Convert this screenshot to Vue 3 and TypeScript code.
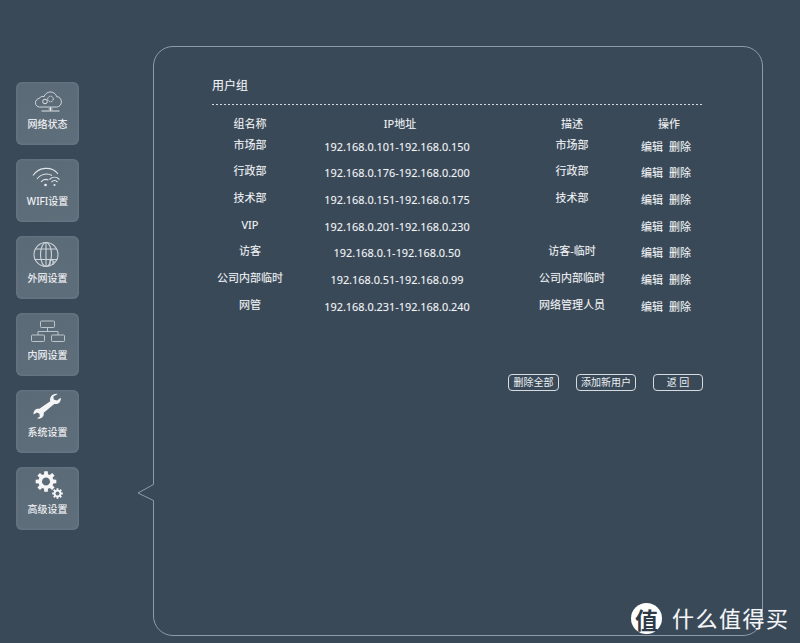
<script setup lang="ts">
interface GroupRow {
  name: string
  range: string
  desc: string
}

const navItems = ['网络状态', 'WIFI设置', '外网设置', '内网设置', '系统设置', '高级设置']

const rows: GroupRow[] = [
  { name: '市场部', range: '192.168.0.101-192.168.0.150', desc: '市场部' },
  { name: '行政部', range: '192.168.0.176-192.168.0.200', desc: '行政部' },
  { name: '技术部', range: '192.168.0.151-192.168.0.175', desc: '技术部' },
  { name: 'VIP', range: '192.168.0.201-192.168.0.230', desc: '' },
  { name: '访客', range: '192.168.0.1-192.168.0.50', desc: '访客-临时' },
  { name: '公司内部临时', range: '192.168.0.51-192.168.0.99', desc: '公司内部临时' },
  { name: '网管', range: '192.168.0.231-192.168.0.240', desc: '网络管理人员' },
]

// gear outline shared by the last nav icon
function gearPath(cx: number, cy: number, outer: number, inner: number, teeth: number): string {
  const step = (Math.PI * 2) / teeth
  const pts: string[] = []
  for (let i = 0; i < teeth; i++) {
    const a = i * step
    const w = step * 0.22
    for (const [r, t] of [[inner, a - w * 1.5], [outer, a - w], [outer, a + w], [inner, a + w * 1.5]] as const) {
      pts.push(`${(cx + r * Math.cos(t)).toFixed(2)} ${(cy + r * Math.sin(t)).toFixed(2)}`)
    }
  }
  return `M${pts.join('L')}Z`
}
</script>

<template>
  <div class="page">
    <nav class="side">
      <div v-for="(label, i) in navItems" :key="label" class="tile">
        <svg class="tile-icon" width="44" height="34" viewBox="0 -2 44 34">
          <g v-if="i === 0" fill="none" stroke="#dfe4e8" stroke-width="1">
            <path transform="translate(4.640 .7) scale(.81 .94)" d="M11 19.500h21c3.500 0 6-2.600 6-5.500 0-3.300-2.700-5.500-5.800-5.500C31 5.300 28 3.500 24.500 3.500c-3.800 0-6.700 2-8 5-1.200-.6-4.500-.6-5.500 1.700-3 .3-5 2.400-5 4.800 0 2.600 2 4.500 5 4.500z" />
            <circle cx="19" cy="13.500" r="2.300" />
            <circle cx="24.500" cy="11" r="2.800" stroke-dasharray="1.500 .7" />
            <path d="M15.500 23h18M24.500 19v4M22.500 21h4" />
          </g>
          <g v-else-if="i === 1" fill="none" stroke="#dfe4e8" stroke-width="1.100">
            <path d="M7 10.500C13 1.500 26 1 32 9" />
            <path d="M11 14C15 8.500 22 8 26 10.500" />
            <path d="M15 17c2-2.500 5-3 7.500-2" />
            <circle cx="19.500" cy="20" r="1.300" fill="#eef1f3" stroke="none" />
            <path d="M23.500 14.500c3-3 7-3 10 0M25.500 17c2-2 4-2 6 0" />
            <circle cx="28.500" cy="20" r="1" fill="#eef1f3" stroke="none" />
          </g>
          <g v-else-if="i === 2" fill="none" stroke="#cdd4da" stroke-width="1.100">
            <circle cx="20" cy="12.500" r="12" />
            <ellipse cx="20" cy="12.500" rx="5.500" ry="12" />
            <path d="M9.500 7h21M8.500 17.500h23M20 .5v24" />
            <path d="M24 24v-6h3v5M27 23v-3h2" />
          </g>
          <g v-else-if="i === 3" fill="none" stroke="#bcc5cc" stroke-width="1">
            <rect x="14.500" y="2" width="14" height="6.500" rx=".8" />
            <rect x="5.500" y="16" width="13" height="6.500" rx=".8" />
            <rect x="25.500" y="16" width="13" height="6.500" rx=".8" />
            <path d="M21.500 8.500v4M12 16v-3.500h20V16" />
          </g>
          <path
            v-else-if="i === 4"
            transform="translate(3.600 -3.200) scale(.78)"
            fill="#f3f5f6"
            d="M36 1.500c-3.200-.6-6.800.5-8.600 3.200-1.300 2-1.500 4.200-.9 6.200L12.500 20.600c-2.200-.3-4.400.2-5.900 1.800-1.300 1.400-1.900 3.400-1.500 5.400l4.300-2.600 3.300 1.800.3 3.700-3.500 2c2.400 1 5 .5 6.800-1.300 1.600-1.600 2.200-3.700 1.800-5.800l13.500-11.400c2.300.6 4.700.1 6.500-1.500 1.700-1.600 2.300-4 1.900-6.200L35 10l-4-1.500-.6-3.800z"
          />
          <g v-else fill="#f5f6f7" fill-rule="evenodd">
            <path :d="gearPath(20, 8.500, 10.500, 7.600, 8) + 'M20 4.500a4 4 0 1 0 .01 0z'" />
            <path :d="gearPath(31.500, 20.500, 5.400, 3.900, 8) + 'M31.500 18.500a2 2 0 1 0 .01 0z'" />
          </g>
        </svg>
        <span class="tile-label">{{ label }}</span>
      </div>
    </nav>

    <main class="panel">
      <svg class="tail" width="18" height="20" viewBox="0 0 18 20">
        <path d="M16.500 1.500 1 10l15.500 7.500" fill="#394958" stroke="#8c9cab" stroke-width="1" />
        <rect x="16" y="2" width="2" height="15" fill="#394958" />
      </svg>

      <h2 class="title">用户组</h2>

      <div class="grid head">
        <span>组名称</span>
        <span class="head-ip">IP地址</span>
        <span>描述</span>
        <span>操作</span>
      </div>
      <div v-for="row in rows" :key="row.range" class="grid row">
        <span class="raised">{{ row.name }}</span>
        <span class="range">{{ row.range }}</span>
        <span class="raised">{{ row.desc }}</span>
        <span class="ops"><a>编辑</a><a>删除</a></span>
      </div>

      <div class="actions">
        <button>删除全部</button>
        <button class="wide">添加新用户</button>
        <button class="back">返 回</button>
      </div>
    </main>

    <div class="mark">
      <span class="mark-logo">值</span>
      <span class="mark-text">什么值得买</span>
    </div>
  </div>
</template>

<style>
html,
body {
  margin: 0;
  background: #394958;
}
</style>

<style scoped>
.page {
  position: relative;
  display: flex;
  align-items: flex-start;
  width: 800px;
  height: 643px;
  overflow: hidden;
  background: #394958;
  color: #f2f4f6;
  font-family: 'Noto Sans', 'Noto Sans CJK SC', sans-serif;
  font-size: 11px;
  text-shadow: 0 0 1px rgba(255, 255, 255, 0.25);
}

.side {
  display: flex;
  flex-direction: column;
  gap: 14px;
  padding: 82px 0 0 16px;
}

.tile {
  display: flex;
  flex-direction: column;
  align-items: center;
  box-sizing: border-box;
  width: 63px;
  height: 63px;
  padding-top: 4px;
  border-radius: 6px;
  background: linear-gradient(160deg, #5b6a77, #5f6e7b);
  box-shadow: inset 0 0 3px rgba(130, 145, 158, 0.6);
}

.tile-icon {
  flex-shrink: 0;
  overflow: visible;
}

.tile-label {
  margin-top: -4px;
  font-size: 10px;
  line-height: 16px;
  white-space: nowrap;
  color: #f6f7f8;
}

.panel {
  position: relative;
  box-sizing: border-box;
  width: 610px;
  height: 590px;
  margin: 46px 0 0 74px;
  padding: 30px 58px 0;
  border: 1px solid #8c9cab;
  border-radius: 20px;
}

.tail {
  position: absolute;
  left: -17px;
  top: 436px;
}

.title {
  margin: 0 0 11px;
  padding-bottom: 11px;
  background: repeating-linear-gradient(to right, #d5dbe0 0 2px, transparent 2px 4px) left bottom / 100% 1px no-repeat;
  font-size: 12px;
  font-weight: 400;
  line-height: 17px;
}

.grid {
  display: grid;
  grid-template-columns: 76px 218px 132px 62px;
  align-items: start;
  text-align: center;
}

.head {
  height: 22.500px;
  line-height: 16px;
}

.head-ip {
  padding-left: 6px;
}

.row {
  height: 26.700px;
  line-height: 16px;
}

.raised {
  margin-top: -2px;
  white-space: nowrap;
}

.range {
  font-size: 10.900px;
}

.ops {
  display: flex;
  gap: 6px;
  padding-left: 3px;
  white-space: nowrap;
}

.actions {
  display: flex;
  justify-content: flex-end;
  gap: 17px;
  margin-top: 48.500px;
  width: 491px;
}

.actions button {
  box-sizing: border-box;
  width: 51px;
  height: 17px;
  padding: 0;
  border: 1px solid #d5dbe0;
  border-radius: 4px;
  background: transparent;
  color: #edf0f2;
  font: inherit;
  font-size: 10px;
  line-height: 14px;
  white-space: nowrap;
}

.actions .wide {
  width: 60px;
}

.actions .back {
  width: 50px;
}

.mark {
  position: absolute;
  left: 631px;
  top: 603px;
  display: flex;
  align-items: center;
  gap: 10px;
}

.mark-logo {
  display: flex;
  align-items: center;
  justify-content: center;
  width: 31px;
  height: 31px;
  border-radius: 50%;
  background: #fff;
  color: #2e3b47;
  font-size: 23px;
  font-weight: 700;
  text-shadow: none;
}

.mark-text {
  color: #f4f5f6;
  font-size: 22px;
  letter-spacing: 1.500px;
  line-height: 31px;
  white-space: nowrap;
}
</style>
